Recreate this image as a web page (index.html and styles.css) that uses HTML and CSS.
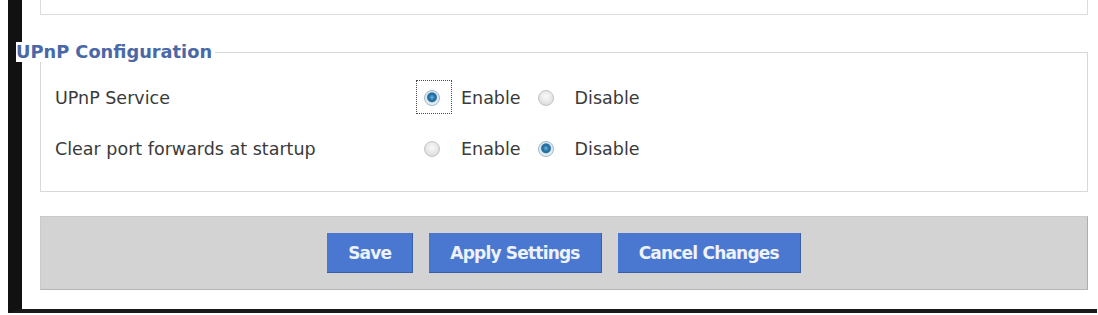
FILE: index.html
```html
<!DOCTYPE html>
<html lang="en">
<head>
    <meta charset="UTF-8">
    <meta name="viewport" content="width=device-width, initial-scale=1.0">
    <title>UPnP</title>
    <link rel="stylesheet" href="styles.css">
</head>
<body>
    <div class="page">
        <div class="prev-section"></div>

        <fieldset class="section">
            <legend>UPnP Configuration</legend>
            <div class="setting">
                <span class="label">UPnP Service</span>
                <div class="options">
                    <span class="focus-ring"><input type="radio" name="upnp_enable" id="upnp_on" checked></span>
                    <label for="upnp_on">Enable</label>
                    <input type="radio" name="upnp_enable" id="upnp_off">
                    <label for="upnp_off">Disable</label>
                </div>
            </div>
            <div class="setting">
                <span class="label">Clear port forwards at startup</span>
                <div class="options">
                    <input type="radio" name="upnp_clear" id="clear_on">
                    <label for="clear_on">Enable</label>
                    <input type="radio" name="upnp_clear" id="clear_off" checked>
                    <label for="clear_off">Disable</label>
                </div>
            </div>
        </fieldset>

        <div class="submit-footer">
            <button>Save</button>
            <button>Apply Settings</button>
            <button>Cancel Changes</button>
        </div>
    </div>
</body>
</html>
```

FILE: styles.css
```css
body {
    margin: 0;
    background-color: #fff;
    font-family: "DejaVu Sans", Tahoma, sans-serif;
    font-size: 17.5px;
    color: #3a3a3a;
}
.page {
    box-sizing: border-box;
    width: 1089px;
    margin: 5px 0 0 8px;
    padding: 0 9px 19px 18px;
    border-left: 14px solid #111;
    border-bottom: 4px solid #1a1a1a;
}
.prev-section {
    height: 14px;
    margin-top: -5px;
    border: 1px solid #dcdcdc;
    border-top: none;
}
.section {
    margin: 27px 0 0 0;
    padding: 10px 14px 17px 14px;
    border: 1px solid #d8d8d8;
}
.section legend {
    margin-left: -39px;
    padding: 0 3px 0 0;
    line-height: 20px;
    font-size: 17.8px;
    background-color: #fff;
    color: #4a68a8;
    font-weight: bold;
}
.setting {
    display: grid;
    grid-template-columns: 369px 1fr;
    align-items: center;
    height: 51px;
}
.options {
    display: flex;
    align-items: center;
}
.options input[type="radio"] {
    appearance: none;
    -webkit-appearance: none;
    box-sizing: border-box;
    width: 16px;
    height: 16px;
    margin: 0;
    border-radius: 50%;
    border: 1px solid #c4c4c4;
    background: radial-gradient(circle at 50% 40%, #fafafa 0%, #e4e4e4 60%, #d0d0d0 100%);
}
.options input[type="radio"]:checked {
    border-color: #9fb6c8;
    background: radial-gradient(circle at 50% 45%, #6fb3de 0%, #1e6fa6 30%, #2b6c98 42%, #d6e6f0 52%, #eef3f6 75%, #d4dde3 100%);
}
.focus-ring {
    display: flex;
    padding: 9px 11px 7px 7px;
    margin: -10px -12px -8px -8px;
    border: 1px dotted #4a4a4a;
}
.options label {
    margin: 0 17px 0 21px;
}
.submit-footer {
    display: flex;
    justify-content: center;
    gap: 16px;
    box-sizing: border-box;
    height: 74px;
    margin-top: 24px;
    align-items: center;
    background-color: #d3d3d3;
    border: 1px solid #cacaca;
    border-right-color: #adadad;
    border-bottom-color: #b5b5b5;
}
.submit-footer button {
    height: 40px;
    padding: 0 21px;
    font-family: "DejaVu Sans", Tahoma, sans-serif;
    font-size: 17px;
    font-weight: bold;
    letter-spacing: -0.8px;
    color: #eef2fb;
    background-color: #4a78d0;
    border: none;
    border-right: 1px solid #3a5fa6;
    border-bottom: 1px solid #3a5fa6;
    cursor: pointer;
}
```
